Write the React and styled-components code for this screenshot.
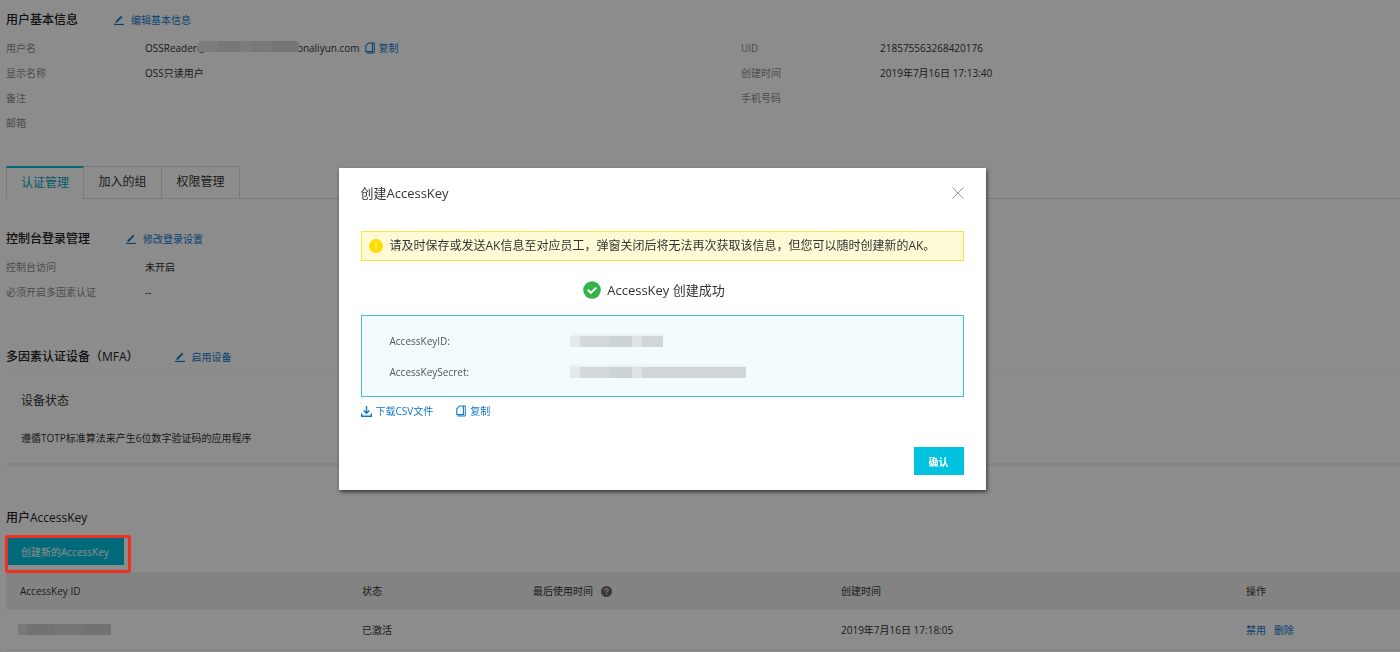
import React, { useState } from 'react';
import styled, { createGlobalStyle } from 'styled-components';

const GlobalStyle = createGlobalStyle`
	* {
		box-sizing: border-box;
	}

	body {
		margin: 0;
		background: #fff;
		color: #333;
		font-family: 'Open Sans', 'Noto Sans CJK SC', sans-serif;
		font-size: 10px;
		line-height: 20px;
	}

	button {
		padding: 0;
		border: 0;
		background: none;
		font-family: inherit;
		cursor: pointer;
	}
`;

const tabs = ['认证管理', '加入的组', '权限管理'];

const EditIcon = () => (
	<svg width="10" height="10" viewBox="0 0 10 10" fill="none" stroke="currentColor">
		<path d="M0 9.5h10" strokeWidth="1.2" />
		<path d="M1.5 8l.5-2L7 .9l1.2 1.1-5 5.2z" fill="currentColor" strokeWidth=".4" />
	</svg>
);

const CopyIcon = () => (
	<svg width="10" height="12" viewBox="0 0 10 12" fill="none" stroke="currentColor">
		<path d="M3.4 1h4v8.6H.8V3.8z" strokeWidth="1.1" strokeLinejoin="round" />
		<path d="M7.4 1h1.9v10H1.6" strokeWidth="1" />
	</svg>
);

const DownloadIcon = () => (
	<svg width="11" height="11" viewBox="0 0 11 11" fill="none" stroke="currentColor" strokeWidth="1.4">
		<path d="M5.5 0v7M2.6 4.4l2.9 2.9 2.9-2.9M.7 7.6v2.6h9.6V7.6" />
	</svg>
);

const CloseIcon = () => (
	<svg width="12" height="12" viewBox="0 0 12 12" stroke="#999" strokeWidth="1">
		<path d="M.5.5l11 11M11.5.5l-11 11" />
	</svg>
);

const WarnIcon = () => (
	<svg width="14" height="14" viewBox="0 0 14 14">
		<circle cx="7" cy="7" r="7" fill="#fd0" />
		<path d="M7 3v5.2M7 9.6v1.5" stroke="#ffef80" strokeWidth="1.4" />
	</svg>
);

const SuccessIcon = () => (
	<svg width="18" height="18" viewBox="0 0 18 18">
		<circle cx="9" cy="9" r="8.8" fill="#35b34a" />
		<path d="M4.8 8.8l3.1 3.1 5.4-5.3" fill="none" stroke="#fff" strokeWidth="2" />
	</svg>
);

const HelpIcon = () => (
	<svg width="11" height="11" viewBox="0 0 10 10">
		<circle cx="5" cy="5" r="5" fill="#666" />
		<path d="M3.4 4q0-1.6 1.6-1.6T6.6 3.9Q6.6 4.7 5 5.4v.8M5 7v1.1" fill="none" stroke="#d6d6d6" />
	</svg>
);

const App = () => {
	const [current, setCurrent] = useState(0);
	const [open, setOpen] = useState(true);

	return (
		<>
			<GlobalStyle />
			<Page>
				<Section>
					<SectionHead>
						<Title>用户基本信息</Title>
						<EditLink href="#">
							<EditIcon />
							编辑基本信息
						</EditLink>
					</SectionHead>
					<InfoGrid>
						<InfoList>
							<Label>用户名</Label>
							<Value>
								OSSReader@
								<NameMask />
								onaliyun.com
								<CopyLink href="#">
									<CopyIcon />
									复制
								</CopyLink>
							</Value>
							<Label>显示名称</Label>
							<Value>OSS只读用户</Value>
							<Label>备注</Label>
							<Value />
							<Label>邮箱</Label>
							<Value />
						</InfoList>
						<InfoList>
							<Label>UID</Label>
							<Value>218575563268420176</Value>
							<Label>创建时间</Label>
							<Value>2019年7月16日 17:13:40</Value>
							<Label>手机号码</Label>
							<Value />
						</InfoList>
					</InfoGrid>
				</Section>

				<TabBar>
					{tabs.map((name, idx) => (
						<Tab key={name} $active={idx === current} onClick={() => setCurrent(idx)}>
							{name}
						</Tab>
					))}
				</TabBar>

				<LoginSection>
					<SectionHead>
						<Title>控制台登录管理</Title>
						<EditLink href="#">
							<EditIcon />
							修改登录设置
						</EditLink>
					</SectionHead>
					<InfoList>
						<Label>控制台访问</Label>
						<Value>未开启</Value>
						<Label>必须开启多因素认证</Label>
						<Value>--</Value>
					</InfoList>
				</LoginSection>

				<MfaSection>
					<SectionHead>
						<Title>多因素认证设备（MFA）</Title>
						<EditLink href="#">
							<EditIcon />
							启用设备
						</EditLink>
					</SectionHead>
					<Device>
						<DeviceTitle>设备状态</DeviceTitle>
						<DeviceText>遵循TOTP标准算法来产生6位数字验证码的应用程序</DeviceText>
					</Device>
				</MfaSection>

				<KeySection>
					<SectionHead>
						<Title>用户AccessKey</Title>
					</SectionHead>
					<Marked>
						<CreateButton onClick={() => setOpen(true)}>创建新的AccessKey</CreateButton>
					</Marked>
					<KeyTable>
						<colgroup>
							<Col $width={342} />
							<Col $width={171} />
							<Col $width={308} />
							<Col $width={405} />
							<Col $width={168} />
						</colgroup>
						<thead>
							<tr>
								<th>AccessKey ID</th>
								<th>状态</th>
								<th>
									<HeadCell>
										最后使用时间
										<HelpIcon />
									</HeadCell>
								</th>
								<th>创建时间</th>
								<th>操作</th>
							</tr>
						</thead>
						<tbody>
							<tr>
								<td>
									<IdMask />
								</td>
								<td>已激活</td>
								<td />
								<td>2019年7月16日 17:18:05</td>
								<td>
									<Actions>
										<Link href="#">禁用</Link>
										<Link href="#">删除</Link>
									</Actions>
								</td>
							</tr>
						</tbody>
					</KeyTable>
				</KeySection>
			</Page>

			{open && (
				<Overlay>
					<Dialog role="dialog" aria-labelledby="dialog-title">
						<DialogHead>
							<DialogTitle id="dialog-title">创建AccessKey</DialogTitle>
							<CloseButton aria-label="关闭" onClick={() => setOpen(false)}>
								<CloseIcon />
							</CloseButton>
						</DialogHead>
						<Notice>
							<WarnIcon />
							请及时保存或发送AK信息至对应员工，弹窗关闭后将无法再次获取该信息，但您可以随时创建新的AK。
						</Notice>
						<Success>
							<SuccessIcon />
							AccessKey 创建成功
						</Success>
						<KeyBox>
							<dt>AccessKeyID:</dt>
							<dd>
								<KeyMask $width={93} />
							</dd>
							<dt>AccessKeySecret:</dt>
							<dd>
								<KeyMask $width={176} />
							</dd>
						</KeyBox>
						<DialogLinks>
							<Link href="#">
								<DownloadIcon />
								下载CSV文件
							</Link>
							<Link href="#">
								<CopyIcon />
								复制
							</Link>
						</DialogLinks>
						<DialogFoot>
							<ConfirmButton onClick={() => setOpen(false)}>确认</ConfirmButton>
						</DialogFoot>
					</Dialog>
				</Overlay>
			)}
		</>
	);
};

const Page = styled.main`
	padding: 8px 0 0 6px;
`;

const Section = styled.section``;

const LoginSection = styled.section`
	margin-top: 28px;
`;

const MfaSection = styled.section`
	margin-top: 41px;
`;

const KeySection = styled.section`
	margin-top: 40px;
`;

const SectionHead = styled.div`
	display: flex;
	align-items: center;
	height: 24px;
`;

const Title = styled.h2`
	margin: 0 36px 0 0;
	color: #222;
	font-size: 12px;
	font-weight: 500;
`;

const Link = styled.a`
	display: inline-flex;
	align-items: center;
	gap: 4px;
	color: #0f78cc;
	text-decoration: none;
`;

const EditLink = styled(Link)`
	gap: 7px;
`;

const CopyLink = styled(Link)`
	margin-left: 5px;
`;

const InfoGrid = styled.div`
	display: grid;
	grid-template-columns: 58fr 52fr;
	align-items: start;
`;

const InfoList = styled.dl`
	display: grid;
	grid-template-columns: 139px 1fr;
	grid-auto-rows: 25px;
	align-items: center;
	margin: 3px 0 0;
`;

const Label = styled.dt`
	color: #8c8c8c;
`;

const Value = styled.dd`
	display: flex;
	align-items: center;
	margin: 0;
`;

const NameMask = styled.span`
	position: relative;
	width: 101px;
	height: 11px;
	margin: 0 -2px 2px -8px;
	border-radius: 4px 4px 0 0;
	background: linear-gradient(
		90deg,
		#e2e2e2 20%,
		#dadada 20% 42%,
		#e4e4e4 42% 52%,
		#d8dcdc 52% 60%,
		#dedede 60% 72%,
		#d8d8d8 72%
	);
`;

const TabBar = styled.div`
	display: flex;
	height: 33px;
	margin-top: 31px;
	border-bottom: 1px solid #dedede;
`;

const Tab = styled.button`
	width: 78px;
	height: ${({ $active }) => ($active ? 33 : 32)}px;
	border: solid #dedede;
	border-width: 1px 1px 0 0;
	color: #333;
	font-size: 12px;
	line-height: 18px;
	padding-bottom: 2px;

	${({ $active }) =>
		$active &&
		`
		border-width: 2px 1px 0;
		border-top-color: #00c1de;
		background: #fff;
		color: #00a5c0;
	`}
`;

const Device = styled.div`
	margin-top: 6px;
	padding: 15px;
	border-top: 1px solid #f8f8f8;
	border-bottom: 3px solid #f0f0f0;
`;

const DeviceTitle = styled.h3`
	margin: 0 0 17px;
	font-size: 12px;
	font-weight: 400;
`;

const DeviceText = styled.p`
	margin: 0;
`;

const Marked = styled.div`
	position: relative;
	display: inline-flex;
	margin: 7px 0 0;
	padding: 0 6px 7px 1px;

	/* red highlight frame, stays above the overlay */
	&::after {
		content: '';
		position: absolute;
		inset: -2px -1px -1px -1px;
		z-index: 20;
		border: 3px solid #ec3323;
		border-radius: 3px;
		pointer-events: none;
	}
`;

const CreateButton = styled.button`
	height: 28px;
	padding: 0 15px 0 14px;
	background: #00c1de;
	color: #fff;
	font-size: 10px;
`;

const KeyTable = styled.table`
	width: 100%;
	border-collapse: collapse;
	table-layout: fixed;

	th,
	td {
		height: 40px;
		padding: 0 14px;
		font-weight: 400;
		text-align: left;
	}

	th {
		height: 38px;
		background: #efefef;
	}

	tbody tr {
		border-bottom: 1px solid #e8e8e8;
	}
`;

const Col = styled.col`
	width: ${({ $width }) => ($width / 1394) * 100}%;
`;

const HeadCell = styled.span`
	display: flex;
	align-items: center;
	gap: 8px;
`;

const IdMask = styled.div`
	width: 93px;
	height: 11px;
	margin-left: -2px;
	background: linear-gradient(90deg, #dcdcdc 10%, #d0d0d0 10% 40%, #d6d6d6 40% 70%, #cfcfcf 70%);
`;

const Actions = styled.div`
	display: flex;
	gap: 8px;
`;

const Overlay = styled.div`
	position: fixed;
	inset: 0;
	z-index: 10;
	display: flex;
	justify-content: center;
	align-items: flex-start;
	padding: 168px 76px 0 0;
	background: rgba(0, 0, 0, 0.45);
`;

const Dialog = styled.div`
	width: 647px;
	padding: 13px 22px 15px;
	background: #fff;
	box-shadow: 1px 2px 4px rgba(0, 0, 0, 0.6);
`;

const DialogHead = styled.div`
	display: flex;
	justify-content: space-between;
	align-items: center;
	height: 24px;
`;

const DialogTitle = styled.h1`
	margin: 0;
	font-size: 13px;
	font-weight: 400;
`;

const CloseButton = styled.button`
	display: flex;
`;

const Notice = styled.div`
	display: flex;
	align-items: center;
	gap: 7px;
	height: 30px;
	margin-top: 26px;
	padding: 0 7px;
	border: 1px solid #fbe339;
	background: #fffbd6;
	font-size: 12px;
	white-space: nowrap;
`;

const Success = styled.div`
	display: flex;
	justify-content: center;
	align-items: center;
	gap: 6px;
	height: 54px;
	padding-top: 4px;
	padding-right: 16px;
	font-size: 13px;
`;

const KeyBox = styled.dl`
	display: grid;
	grid-template-columns: 180px 1fr;
	grid-auto-rows: 31px;
	align-items: center;
	margin: 0;
	padding: 9px 28px;
	border: 1px solid #45c2cf;
	background: #f2fbfd;

	dt {
		color: #555;
	}

	dd {
		margin: 0;
	}
`;

const KeyMask = styled.div`
	width: ${({ $width }) => $width}px;
	height: 11px;
	margin-top: 2px;
	background: linear-gradient(
		90deg,
		#e4eaeb 0 10px,
		#d3d9da 10px 40px,
		#ccd3d4 40px 62px,
		#dee4e5 62px 72px,
		#d0d6d7 72px
	);
	box-shadow: 0 -3px 3px -1px #e9f0f1;
`;

const DialogLinks = styled.div`
	display: flex;
	gap: 23px;
	margin-top: 4px;
`;

const DialogFoot = styled.div`
	display: flex;
	justify-content: flex-end;
	margin-top: 26px;
`;

const ConfirmButton = styled.button`
	width: 50px;
	height: 28px;
	background: #00c1de;
	color: #fff;
	font-size: 10px;
	font-weight: 700;
`;

export default App;
